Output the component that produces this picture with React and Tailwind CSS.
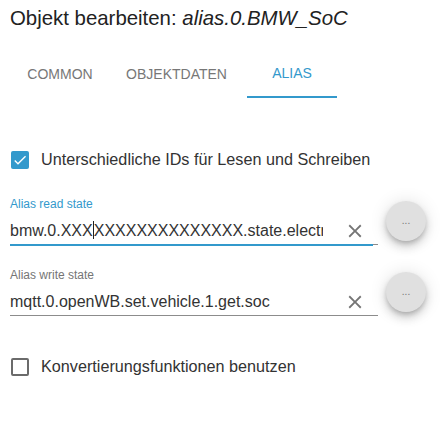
const ClearIcon = () => (
  <svg viewBox="0 0 24 24" className="w-[22px] h-[22px] fill-[#757575]">
    <path d="M19 6.41L17.59 5 12 10.59 6.41 5 5 6.41 10.59 12 5 17.59 6.41 19 12 13.41 17.59 19 19 17.59 13.41 12z" />
  </svg>
);

const CheckBox = ({ checked }) =>
  checked ? (
    <div className="w-[18px] h-[18px] rounded-[2px] bg-[#3399cc] flex items-center justify-center">
      <svg viewBox="0 0 24 24" className="w-[16px] h-[16px] fill-white">
        <path d="M9 16.17L4.83 12l-1.42 1.41L9 19 21 7l-1.41-1.41z" />
      </svg>
    </div>
  ) : (
    <div className="w-[18px] h-[18px] rounded-[2px] border-2 border-[#6b6b6b]" />
  );

const AliasField = ({ label, focused, children }) => (
  <div className="flex items-start">
    <div className="w-[368px]">
      <div className={`text-[12px] leading-[14px] ${focused ? 'text-[#3399cc]' : 'text-[#757575]'}`}>
        {label}
      </div>
      <div className="mt-[6px] flex items-center h-[27px]">
        <div className="w-[313px] overflow-hidden whitespace-nowrap text-[16px] text-[#333]">{children}</div>
        <div className="ml-auto mr-[12px] flex items-center">
          <ClearIcon />
        </div>
      </div>
      {focused ? (
        <div className="flex items-start">
          <div className="w-[363px] h-[2px] bg-[#3399cc]" />
          <div className="flex-1 h-px bg-[#8c8c8c]" />
        </div>
      ) : (
        <div className="h-px bg-[#8c8c8c]" />
      )}
    </div>
    <button className="ml-[8px] mt-[4px] w-[40px] h-[40px] rounded-full bg-[#e0e0e0] shadow-[0_3px_5px_-1px_rgba(0,0,0,0.2),0_6px_10px_0_rgba(0,0,0,0.14),0_1px_18px_0_rgba(0,0,0,0.12)] text-[#757575] text-[10px] leading-none">
      ...
    </button>
  </div>
);

export default function App() {
  return (
    <div className="w-[442px] h-[428px] bg-white font-['Liberation_Sans',Arial,sans-serif] text-[#333] px-[10px]">
      <div className="pt-[6px] text-[20.4px] leading-[24px] text-[#222]">
        Objekt bearbeiten: <i>alias.0.BMW_SoC</i>
      </div>
      <div className="mt-[20px] ml-[4px] flex h-[48px] text-[14px] uppercase">
        <div className="w-[92px] flex items-center justify-center text-[#777]">Common</div>
        <div className="w-[141px] flex items-center justify-center text-[#777]">Objektdaten</div>
        <div className="w-[90px] flex items-center justify-center text-[#3399cc] border-b-2 border-[#3399cc]">
          Alias
        </div>
      </div>
      <div className="mt-[52px] flex items-center gap-[12px] pl-[1px]">
        <CheckBox checked />
        <span className="text-[16.2px] leading-[19px]">Unterschiedliche IDs für Lesen und Schreiben</span>
      </div>
      <div className="mt-[28px]">
        <AliasField label="Alias read state" focused>
          bmw.0.XXX
          <span className="inline-block w-px h-[18px] bg-[#222] align-middle -mt-[2px]" />
          XXXXXXXXXXXXXX.state.electricChargingState.chargingLevelHv
        </AliasField>
      </div>
      <div className="mt-[22px]">
        <AliasField label="Alias write state">mqtt.0.openWB.set.vehicle.1.get.soc</AliasField>
      </div>
      <div className="mt-[41px] flex items-center gap-[12px] pl-[1px]">
        <CheckBox />
        <span className="text-[16.2px] leading-[19px]">Konvertierungsfunktionen benutzen</span>
      </div>
    </div>
  );
}
